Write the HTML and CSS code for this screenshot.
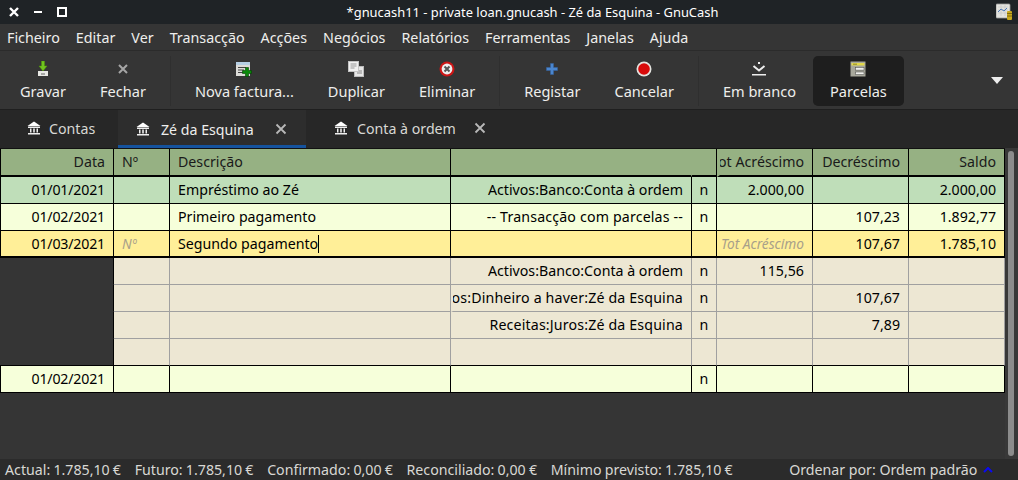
FILE: index.html
```html
<!DOCTYPE html>
<html lang="pt">
<head>
<meta charset="utf-8">
<title>GnuCash</title>
<link rel="stylesheet" href="styles.css">
</head>
<body>
<svg class="defs" width="0" height="0"><defs>
<symbol id="bank" viewBox="0 0 14 14">
<path d="M7 .5 13.5 5H.5z" fill="#fff"/><rect x="1" y="5.5" width="12" height="1.5" fill="#eee"/>
<path d="M3 7.5h1.5v4H3zM6.2 7.5h1.6v4H6.2zM9.5 7.5H11v4H9.5z" fill="#eee"/><rect x="1" y="12" width="12" height="1.5" fill="#eee"/>
</symbol>
<symbol id="tabx" viewBox="0 0 12 12"><path d="M1.5 1.5l9 9M10.5 1.5l-9 9" stroke="#b8b8b8" stroke-width="1.8" fill="none"/></symbol>
</defs></svg>
<header class="titlebar">
  <div class="winbtns">
    <svg width="12" height="12" viewBox="0 0 12 12"><path d="M2 2l8 8M10 2l-8 8" stroke="#fff" stroke-width="2.4"/></svg>
    <svg width="12" height="12" viewBox="0 0 12 12"><path d="M2 6h8" stroke="#fff" stroke-width="2"/></svg>
    <svg width="12" height="12" viewBox="0 0 12 12"><rect x="2" y="2" width="8" height="8" fill="none" stroke="#fff" stroke-width="2"/></svg>
  </div>
  <div class="wintitle">*gnucash11 - private loan.gnucash - Zé da Esquina - GnuCash</div>
  <svg class="appicon" width="16" height="18" viewBox="0 0 16 18"><rect x="0" y="1" width="14" height="14" rx="1" fill="#e4e4e0" stroke="#9a9a9a" stroke-width=".8"/><path d="M2 4h10M2 7h10M2 10h10M5 2v11M9 2v11" stroke="#c4c4c4" stroke-width=".6"/><path d="M2 9l3-3 3 2 3-3" stroke="#4a78b8" fill="none"/><rect x="11" y="8" width="5" height="9" rx="1" fill="#c9a91e"/><path d="M11 10.5h5M11 13h5" stroke="#7f6a10"/></svg>
</header>
<nav class="menubar">
  <span class="menuitem">Ficheiro</span><span class="menuitem">Editar</span><span class="menuitem">Ver</span><span class="menuitem">Transacção</span><span class="menuitem">Acções</span><span class="menuitem">Negócios</span><span class="menuitem">Relatórios</span><span class="menuitem">Ferramentas</span><span class="menuitem">Janelas</span><span class="menuitem">Ajuda</span>
</nav>
<div class="toolbar">
  <div class="tool">
    <svg width="16" height="16" viewBox="0 0 16 16"><rect x="3" y="10" width="10" height="5" fill="#e8e8e4"/><rect x="6" y="12.5" width="4" height="1" fill="#666"/><path d="M6.5 0h3v5H12L8 10 4 5h2.500z" fill="#71c41f" stroke="#4e9a06" stroke-width=".5"/></svg>
    <span>Gravar</span>
  </div>
  <div class="tool">
    <svg width="16" height="16" viewBox="0 0 16 16"><path d="M4 4l8 8M12 4l-8 8" stroke="#a6a6a6" stroke-width="2"/></svg>
    <span>Fechar</span>
  </div>
  <i class="sep"></i>
  <div class="tool">
    <svg width="16" height="16" viewBox="0 0 16 16"><rect x="0" y="1" width="14" height="14" fill="#dcdcd8"/><rect x="0" y="1" width="14" height="3" fill="#b6cfe4"/><path d="M2 6.500h8M2 9h6M2 11.500h6" stroke="#444" stroke-width="1"/><path d="M9.500 6.500h3v3h3v3h-3v3h-3v-3h-3v-3h3z" fill="#0a8a0a" stroke="#043f04" stroke-width=".6"/></svg>
    <span>Nova factura...</span>
  </div>
  <div class="tool">
    <svg width="16" height="16" viewBox="0 0 16 16"><rect x="6.500" y="5.500" width="9" height="10" fill="#e6e6e6" stroke="#bbb"/><path d="M9 10h5M9 12h5" stroke="#888"/><rect x=".5" y=".5" width="10" height="10" fill="#f0f0f0" stroke="#c4c4c4"/><path d="M2.500 3h6M2.500 5h6M2.500 7h4" stroke="#999"/></svg>
    <span>Duplicar</span>
  </div>
  <div class="tool">
    <svg width="16" height="16" viewBox="0 0 16 16"><circle cx="8" cy="8" r="7.500" fill="#cc1616"/><circle cx="8" cy="8" r="5.400" fill="#eee"/><path d="M5.500 5.500l5 5M10.500 5.500l-5 5" stroke="#555" stroke-width="2"/></svg>
    <span>Eliminar</span>
  </div>
  <i class="sep"></i>
  <div class="tool">
    <svg width="16" height="16" viewBox="0 0 16 16"><path d="M6.500 2.500h3v4h4v3h-4v4h-3v-4h-4v-3h4z" fill="#4a86cf" stroke="#3465a4" stroke-width=".5"/></svg>
    <span>Registar</span>
  </div>
  <div class="tool">
    <svg width="16" height="16" viewBox="0 0 16 16"><circle cx="8" cy="8" r="7.500" fill="#e4e4e0"/><circle cx="8" cy="8" r="5.800" fill="#d80a0a"/></svg>
    <span>Cancelar</span>
  </div>
  <i class="sep"></i>
  <div class="tool">
    <svg width="16" height="16" viewBox="0 0 16 16"><rect x="7" y="1" width="2" height="2" fill="#eee"/><path d="M2.500 5l5.500 4.500L13.500 5" stroke="#eee" stroke-width="2" fill="none"/><rect x="1" y="13" width="14" height="1.500" fill="#eee"/></svg>
    <span>Em branco</span>
  </div>
  <div class="tool active">
    <svg width="16" height="16" viewBox="0 0 16 16"><rect x=".5" y=".5" width="15" height="15" fill="#a8a89c"/><rect x="1.500" y="2" width="13" height="2.500" fill="#e2d84a"/><path d="M3 3.200h4" stroke="#6a6420" stroke-width=".7"/><rect x="5.500" y="6.500" width="8.500" height="2.600" fill="#f0f0ec" stroke="#444" stroke-width=".5"/><rect x="5.500" y="11" width="8.500" height="2.600" fill="#f0f0ec" stroke="#444" stroke-width=".5"/></svg>
    <span>Parcelas</span>
  </div>
  <div class="overflow"><svg width="12" height="7" viewBox="0 0 12 7"><path d="M0 0h12L6 7z" fill="#eee"/></svg></div>
</div>
<div class="tabs">
  <div class="tab first"><svg class="bank"><use href="#bank"/></svg><span>Contas</span></div>
  <div class="tab current"><svg class="bank"><use href="#bank"/></svg><span>Zé da Esquina</span><svg class="tabclose"><use href="#tabx"/></svg></div>
  <div class="tab last"><svg class="bank"><use href="#bank"/></svg><span>Conta à ordem</span><svg class="tabclose"><use href="#tabx"/></svg></div>
</div>
<main class="content">
  <div class="sheet">
    <div class="row head">
      <div class="c r"><span>Data</span></div><div class="c"><span>Nº</span></div><div class="c"><span>Descrição</span></div><div class="c merged"></div><div class="c"></div><div class="c r tight"><span>Tot Acréscimo</span></div><div class="c r"><span>Decréscimo</span></div><div class="c r"><span>Saldo</span></div>
    </div>
    <div class="row primary">
      <div class="c r date"><span>01/01/2021</span></div><div class="c"></div><div class="c"><span>Empréstimo ao Zé</span></div><div class="c r"><span>Activos:Banco:Conta à ordem</span></div><div class="c m"><span>n</span></div><div class="c r"><span>2.000,00</span></div><div class="c r"></div><div class="c r"><span>2.000,00</span></div>
    </div>
    <div class="row secondary">
      <div class="c r date"><span>01/02/2021</span></div><div class="c"></div><div class="c"><span>Primeiro pagamento</span></div><div class="c r wide"><span>-- Transacção com parcelas --</span></div><div class="c m"><span>n</span></div><div class="c r"></div><div class="c r"><span>107,23</span></div><div class="c r"><span>1.892,77</span></div>
    </div>
    <div class="row cursor">
      <div class="c r date"><span>01/03/2021</span></div><div class="c hint"><span>Nº</span></div><div class="c"><span>Segundo pagamento<i class="caret"></i></span></div><div class="c r"></div><div class="c m"></div><div class="c r hint"><span>Tot Acréscimo</span></div><div class="c r"><span>107,67</span></div><div class="c r"><span>1.785,10</span></div>
    </div>
    <div class="row split">
      <div class="c blank"></div><div class="c"></div><div class="c"></div><div class="c r"><span>Activos:Banco:Conta à ordem</span></div><div class="c m"><span>n</span></div><div class="c r"><span>115,56</span></div><div class="c r"></div><div class="c r"></div>
    </div>
    <div class="row split">
      <div class="c blank"></div><div class="c"></div><div class="c"></div><div class="c r clipped wide"><span>Activos:Dinheiro a haver:Zé da Esquina</span></div><div class="c m"><span>n</span></div><div class="c r"></div><div class="c r"><span>107,67</span></div><div class="c r"></div>
    </div>
    <div class="row split">
      <div class="c blank"></div><div class="c"></div><div class="c"></div><div class="c r wide"><span>Receitas:Juros:Zé da Esquina</span></div><div class="c m"><span>n</span></div><div class="c r"></div><div class="c r"><span>7,89</span></div><div class="c r"></div>
    </div>
    <div class="row split lastsplit">
      <div class="c blank"></div><div class="c"></div><div class="c"></div><div class="c"></div><div class="c"></div><div class="c"></div><div class="c"></div><div class="c"></div>
    </div>
    <div class="row secondary">
      <div class="c r date"><span>01/02/2021</span></div><div class="c"></div><div class="c"></div><div class="c"></div><div class="c m"><span>n</span></div><div class="c"></div><div class="c"></div><div class="c"></div>
    </div>
  </div>
  <div class="scrollbar"><div class="thumb"></div></div>
</main>
<footer class="status">
  <span class="stat s1">Actual: 1.785,10 €</span>
  <span class="stat">Futuro: 1.785,10 €</span>
  <span class="stat">Confirmado: 0,00 €</span>
  <span class="stat">Reconciliado: 0,00 €</span>
  <span class="stat">Mínimo previsto: 1.785,10 €</span>
  <span class="sort">Ordenar por: Ordem padrão</span>
  <svg class="sortarrow" width="10" height="6" viewBox="0 0 10 6"><path d="M1 5l4-4 4 4" stroke="#0a0af0" stroke-width="2" fill="none"/></svg>
</footer>
</body>
</html>
```
FILE: styles.css
```css
* { box-sizing: border-box; }
html, body { margin: 0; height: 100%; }
body {
  width: 1018px; height: 480px; overflow: hidden;
  display: flex; flex-direction: column;
  background: #353535; color: #eeeeec;
  font: 14.2px "Noto Sans", sans-serif;
}
.defs { position: absolute; }

.titlebar { height: 24px; flex: none; display: flex; align-items: center; background: #1f2326; }
.winbtns { width: 86px; display: flex; gap: 12px; padding-left: 8px; }
.wintitle { flex: 1; text-align: center; color: #fff; font-size: 12.9px; padding-right: 17px; }
.appicon { margin: 0 6px 0 0; width: 16px; }

.menubar { height: 27px; flex: none; display: flex; align-items: center; padding-left: 7px; gap: 16px; background: #353535; border-bottom: 1px solid #2b2b2b; font-size: 14.3px; }

.toolbar { height: 59px; flex: none; display: flex; align-items: flex-start; padding: 5px 0 0 3px; background: #353535; border-bottom: 1px solid #1f1f1f; }
.tool { height: 50px; padding: 5px 17px 0; display: flex; flex-direction: column; align-items: center; gap: 5px; border-radius: 5px; white-space: nowrap; font-size: 14.56px; }
.tool svg { flex: none; }
.tool span { line-height: 18px; }
.tool.active { background: #1e1e1e; }
.sep { width: 1px; height: 50px; margin: 0 7px; background: #2f2f2f; }
.overflow { margin-left: auto; padding: 21px 15px 0 0; }
.overflow svg { display: block; }

.tabs { height: 38px; flex: none; display: flex; background: #272727; }
.tab { display: flex; align-items: center; height: 38px; padding-bottom: 2px; color: #d8d8d4; }
.tab.first { width: 118px; padding-left: 27px; }
.tab.current { width: 188px; padding-left: 18px; background: #2d2d2d; border-bottom: 3px solid #15539e; color: #eeeeec; padding-top: 3px; padding-bottom: 0; }
.tab.last { padding-left: 28px; }
.bank { width: 14px; height: 14px; margin-right: 8px; }
.tab.current .bank { margin-right: 11px; }
.tab.last .bank { margin-right: 9px; }
.tabclose { width: 12px; height: 12px; margin-left: 21px; }
.tab.last .tabclose { margin-left: 18px; }

.content { flex: 1; display: flex; background: #353535; min-height: 0; }
.sheet { width: 1005px; flex: none; border-top: 1px solid #111; }
.row {
  display: grid; grid-template-columns: 114px 56px 281px 241px 25px 96px 96px 96px;
  height: 27px; color: #000;
}
.c { min-width: 0; padding: 0 8px 1px; display: flex; align-items: center; white-space: nowrap; overflow: hidden; border-right: 1px solid #000; border-bottom: 1px solid #000; }
.c:first-child { border-left: 1px solid #000; }
.c.r { justify-content: flex-end; }
.c.m { justify-content: center; padding: 0 0 1px; }
.c span { flex: none; }
.date span { letter-spacing: -.2px; }
.wide span { letter-spacing: .16px; }
.c.tight { padding-left: 0; border-left: 3px solid #96b183; }
.head { height: 28px; background: #96b183; color: #1a1a1a; }
.head .c { border-bottom-width: 2px; }
.head .c.merged { border-right-color: transparent; }
.primary { background: #bfdeb9; }
.secondary { background: #f6ffda; }
.cursor { background: #ffef98; }
.cursor .c { border-bottom-width: 2px; }
.hint { color: #a8a08a; font-style: italic; font-size: 13.7px; }
.caret { display: inline-block; width: 1px; height: 18px; background: #000; vertical-align: -4px; }
.split { background: #ede7d3; }
.split .c { border-color: #a0a0a0; }
.split .c.clipped { padding-left: 0; border-left: 2px solid #ede7d3; }
.lastsplit .c { border-bottom-color: #000; }
.split .c.blank { background: #353535; border-left: 0; border-bottom-color: transparent; border-right-color: #000; }
.lastsplit .c.blank { border-bottom-color: #000; }

.scrollbar { flex: 1; padding: 3px 4px 3px 3px; background: #383838; }
.thumb { width: 6px; height: 100%; border-radius: 3px; background: #8c8c8c; }

.status { height: 21px; flex: none; display: flex; align-items: center; padding-left: 5px; background: #2b2b2b; color: #d8d8d4; gap: 13.7px; word-spacing: -.5px; }
.sort { margin-left: auto; word-spacing: 0; }
.sortarrow { margin: 0 25px 0 -8px; }
```
